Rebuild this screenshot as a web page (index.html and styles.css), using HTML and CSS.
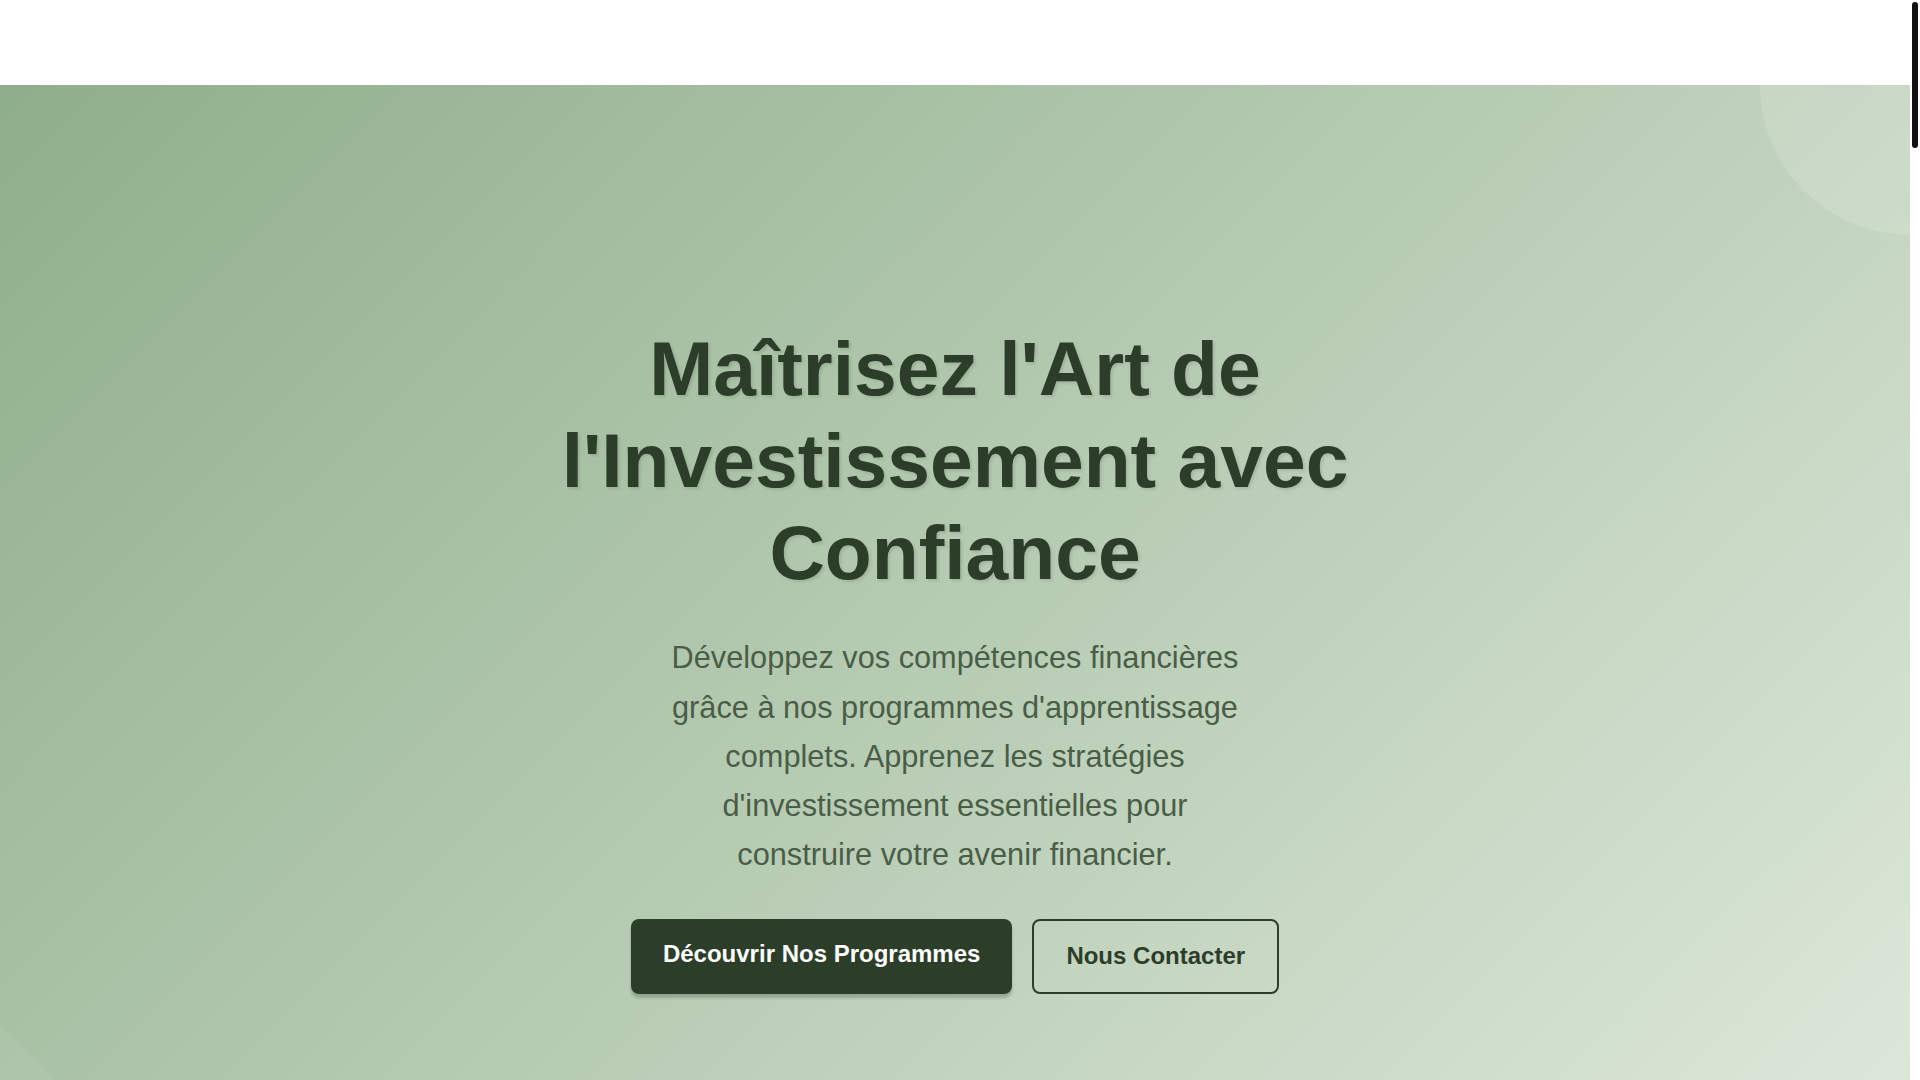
FILE: index.html
```html
<!DOCTYPE html>
<html lang="fr">
<head>
<meta charset="utf-8">
<title>Maîtrisez l'Art de l'Investissement</title>
<link rel="stylesheet" href="styles.css">
</head>
<body>
<div class="page">
  <header class="site-header"></header>
  <main>
    <section class="hero">
      <span class="hero-shape hero-shape-top"></span>
      <span class="hero-shape hero-shape-bottom"></span>
      <div class="hero-inner">
        <h1 class="hero-title">Maîtrisez l'Art de l'Investissement avec Confiance</h1>
        <p class="hero-text">Développez vos compétences financières grâce à nos programmes d'apprentissage complets. Apprenez les stratégies d'investissement essentielles pour construire votre avenir financier.</p>
        <div class="hero-actions">
          <a class="btn btn-primary" href="#programmes">Découvrir Nos Programmes</a>
          <a class="btn btn-outline" href="#contact">Nous Contacter</a>
        </div>
      </div>
    </section>
  </main>
</div>
<div class="scroll-track" aria-hidden="true"><span class="scroll-thumb"></span></div>
</body>
</html>
```

FILE: styles.css
```css
* {
  box-sizing: border-box;
}

body {
  margin: 0;
  font-family: "Liberation Sans", Arial, sans-serif;
  color: #2c3e2a;
  background: #ffffff;
}

.page {
  margin-right: 10px;
  height: 100vh;
  overflow: hidden;
}

.site-header {
  height: 85px;
  background: #fefefe;
}

.hero {
  position: relative;
  overflow: hidden;
  height: calc(100vh - 85px);
  padding: 237px 2rem 0;
  background: linear-gradient(135deg, #8fae8b 0%, #dce7d9 100%);
  text-align: center;
}

.hero-shape {
  position: absolute;
  border-radius: 50%;
  pointer-events: none;
}

.hero-shape-top {
  width: 300px;
  height: 300px;
  top: -150px;
  right: -150px;
  background: rgba(255, 255, 255, 0.14);
}

.hero-shape-bottom {
  width: 600px;
  height: 600px;
  top: 878px;
  left: -485px;
  background: rgba(255, 255, 255, 0.06);
}

.hero-inner {
  position: relative;
  max-width: 800px;
  margin: 0 auto;
}

.hero-title {
  margin: 0 0 35px;
  font-size: 4.8rem;
  line-height: 1.2;
  font-weight: 700;
  color: #2c3e2a;
  text-shadow: 2px 2px 3px rgba(0, 0, 0, 0.1);
}

.hero-text {
  max-width: 600px;
  margin: 0 auto 40px;
  font-size: 1.92rem;
  line-height: 1.6;
  color: #4a5d47;
}

.hero-actions {
  display: flex;
  justify-content: center;
  gap: 20px;
}

.btn {
  display: inline-block;
  font-size: 1.5rem;
  font-weight: 700;
  line-height: 1.6;
  text-decoration: none;
  border-radius: 8px;
}

.btn-primary {
  padding: 16px 32px 20px;
  background: #2c3d2a;
  color: #ffffff;
  box-shadow: 0 4px 3px rgba(0, 0, 0, 0.2);
}

.btn-outline {
  padding: 16px 32px;
  border: 2px solid #2c3d2a;
  color: #2c3d2a;
  background: transparent;
}

.scroll-track {
  position: fixed;
  top: 0;
  right: 0;
  width: 10px;
  height: 100vh;
  padding: 2px 2px 0;
  background: #ffffff;
}

.scroll-thumb {
  display: block;
  height: 146px;
  border-radius: 4px;
  background: #111111;
}
```
